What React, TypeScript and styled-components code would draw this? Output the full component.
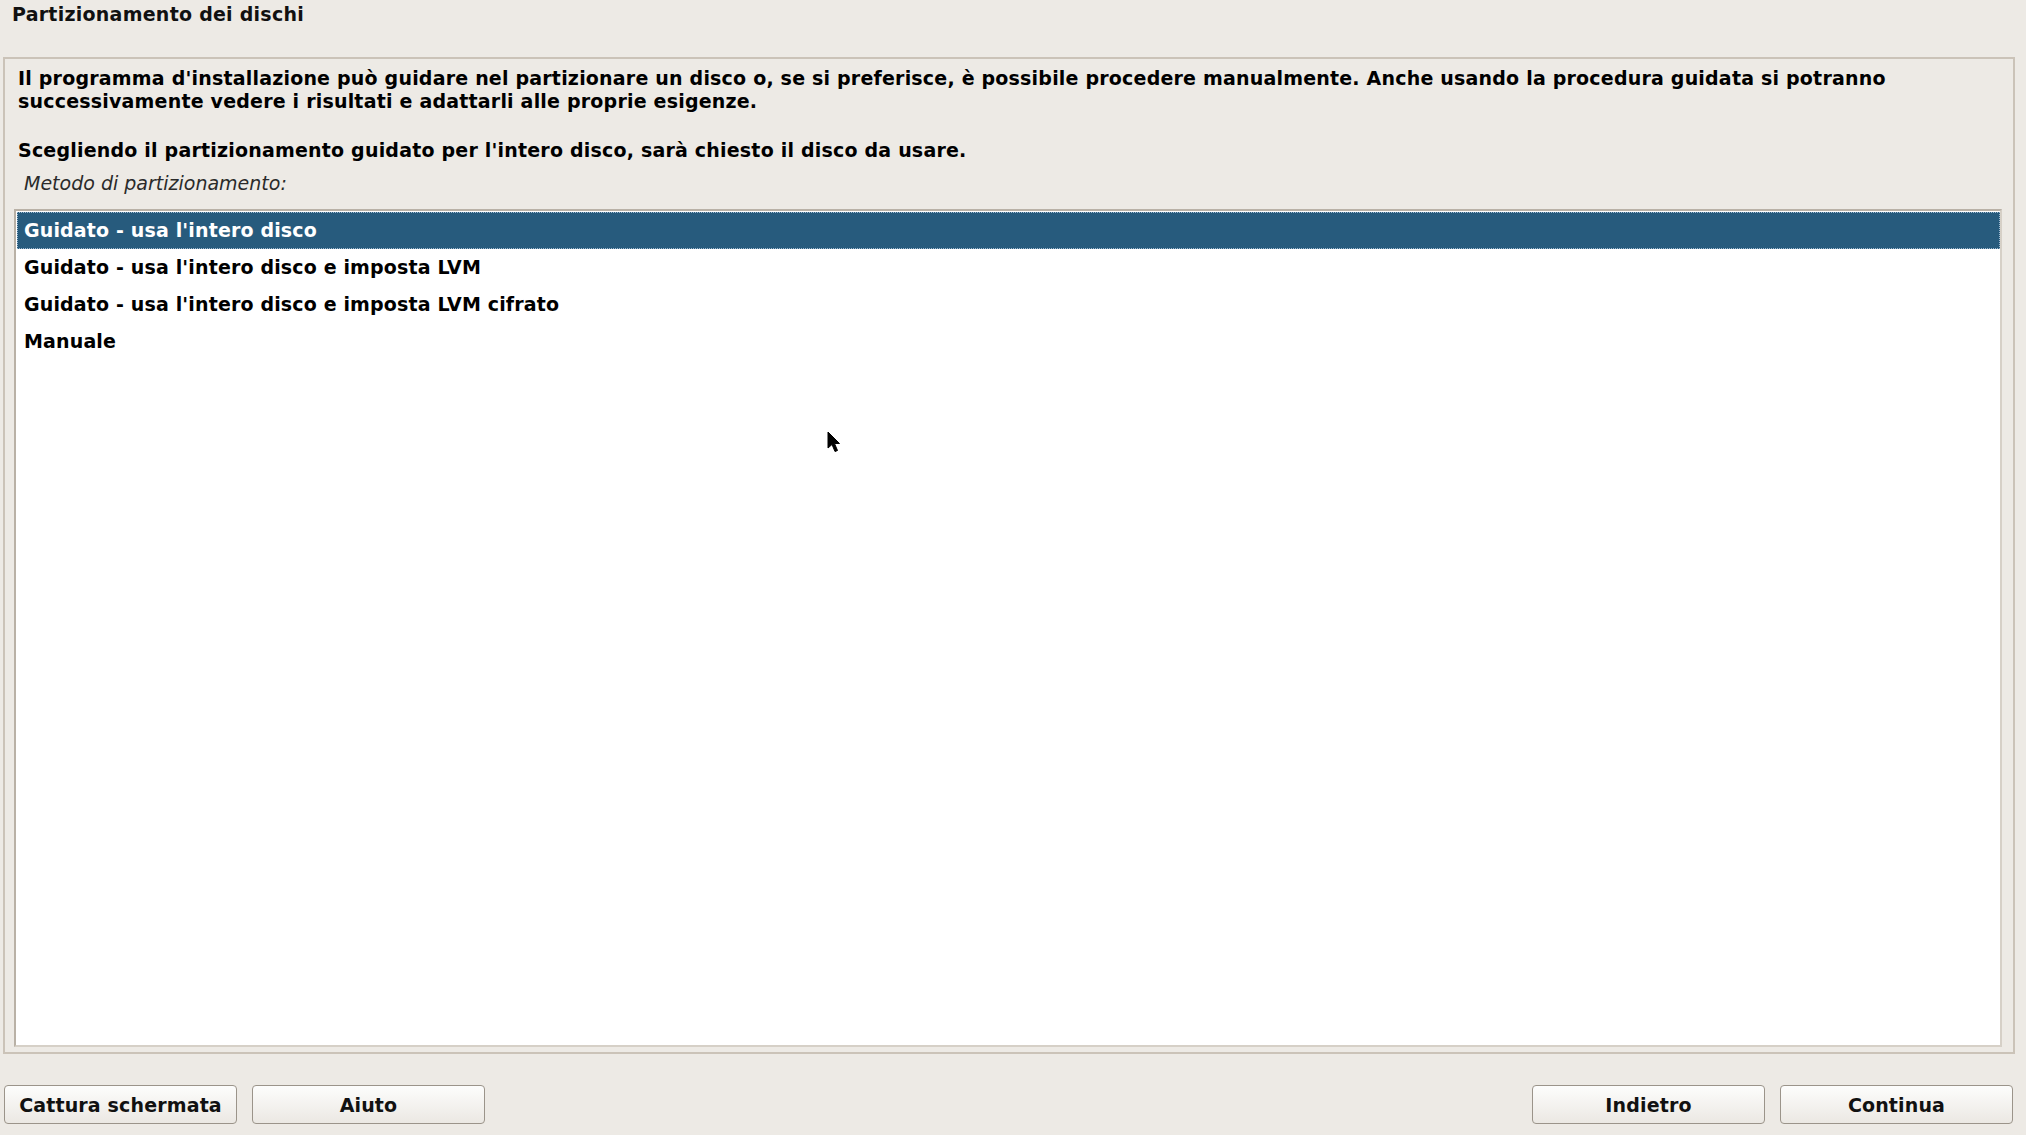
import styled, { createGlobalStyle } from "styled-components";

const GlobalStyle = createGlobalStyle`
  html, body {
    margin: 0;
    padding: 0;
    background: #edeae5;
  }
  body {
    font-family: "DejaVu Sans", "Liberation Sans", sans-serif;
    font-size: 19px;
    color: #000;
  }
`;

const methods = [
  "Guidato - usa l'intero disco",
  "Guidato - usa l'intero disco e imposta LVM",
  "Guidato - usa l'intero disco e imposta LVM cifrato",
  "Manuale",
];

export default function App() {
  return (
    <>
      <GlobalStyle />
      <Page>
        <Title>Partizionamento dei dischi</Title>
        <Frame>
          <Intro>
            Il programma d'installazione può guidare nel partizionare un disco o, se si
            preferisce, è possibile procedere manualmente. Anche usando la procedura guidata si
            potranno successivamente vedere i risultati e adattarli alle proprie esigenze.
          </Intro>
          <Intro $spaced>
            Scegliendo il partizionamento guidato per l'intero disco, sarà chiesto il disco da
            usare.
          </Intro>
          <Label>Metodo di partizionamento:</Label>
          <ListBox>
            {methods.map((m, i) => (
              <Row key={m} $selected={i === 0}>
                {m}
              </Row>
            ))}
            <Cursor width="14" height="22" viewBox="0 0 14 22">
              <path d="M1 1 L1 17 L5 13.5 L8 20.5 L10.5 19.5 L7.5 12.5 L12.5 12.5 Z" fill="#000" stroke="#000" strokeWidth="1" strokeLinejoin="miter" />
            </Cursor>
          </ListBox>
        </Frame>
        <ButtonBar>
          <ButtonGroup>
            <Button>Cattura schermata</Button>
            <Button>Aiuto</Button>
          </ButtonGroup>
          <ButtonGroup>
            <Button>Indietro</Button>
            <Button>Continua</Button>
          </ButtonGroup>
        </ButtonBar>
      </Page>
    </>
  );
}

const Page = styled.div`
  box-sizing: border-box;
  height: 100vh;
  display: flex;
  flex-direction: column;
  padding: 3px 11px 11px 3px;
`;

const Title = styled.div`
  font-weight: bold;
  line-height: 23px;
  letter-spacing: 0.25px;
  padding-left: 9px;
  color: #111;
  margin-bottom: 31px;
`;

const Frame = styled.div`
  flex: 1;
  min-height: 0;
  display: flex;
  flex-direction: column;
  border: 2px solid #cbc3b8;
  padding: 8px 11px 5px 9px;
`;

const Intro = styled.p<{ $spaced?: boolean }>`
  margin: ${(p) => (p.$spaced ? "26px 0 0" : "0")};
  padding-left: 4px;
  font-weight: bold;
  line-height: 23px;
  letter-spacing: 0.2px;
`;

const Label = styled.div`
  font-style: italic;
  line-height: 23px;
  color: #2a2a2a;
  padding-left: 10px;
  margin-top: 10px;
  margin-bottom: 14px;
`;

const ListBox = styled.div`
  position: relative;
  flex: 1;
  background: #fff;
  border: 2px solid;
  border-color: #b9b1a6 #d6d0c7 #d6d0c7 #b9b1a6;
  padding: 1px 0 0 1px;
`;

const Row = styled.div<{ $selected?: boolean }>`
  box-sizing: border-box;
  height: 37px;
  line-height: 35px;
  padding-left: 6px;
  font-weight: bold;
  letter-spacing: 0.15px;
  border: 1px dotted ${(p) => (p.$selected ? "#9fbad0" : "transparent")};
  background: ${(p) => (p.$selected ? "#275b7d" : "transparent")};
  color: ${(p) => (p.$selected ? "#fff" : "#000")};
`;

const Cursor = styled.svg`
  position: absolute;
  left: 811px;
  top: 220px;
`;

const ButtonBar = styled.div`
  display: flex;
  justify-content: space-between;
  margin-top: 31px;
  padding: 0 2px 0 1px;
`;

const ButtonGroup = styled.div`
  display: flex;
  gap: 15px;
`;

const Button = styled.button`
  box-sizing: border-box;
  width: 233px;
  height: 39px;
  border: 1px solid #9b948a;
  border-radius: 4px;
  background: linear-gradient(#fdfdfc, #ebe8e3);
  font-family: "DejaVu Sans", "Liberation Sans", sans-serif;
  font-size: 19px;
  font-weight: bold;
  letter-spacing: 0.15px;
  color: #111;
  padding: 0;
`;
